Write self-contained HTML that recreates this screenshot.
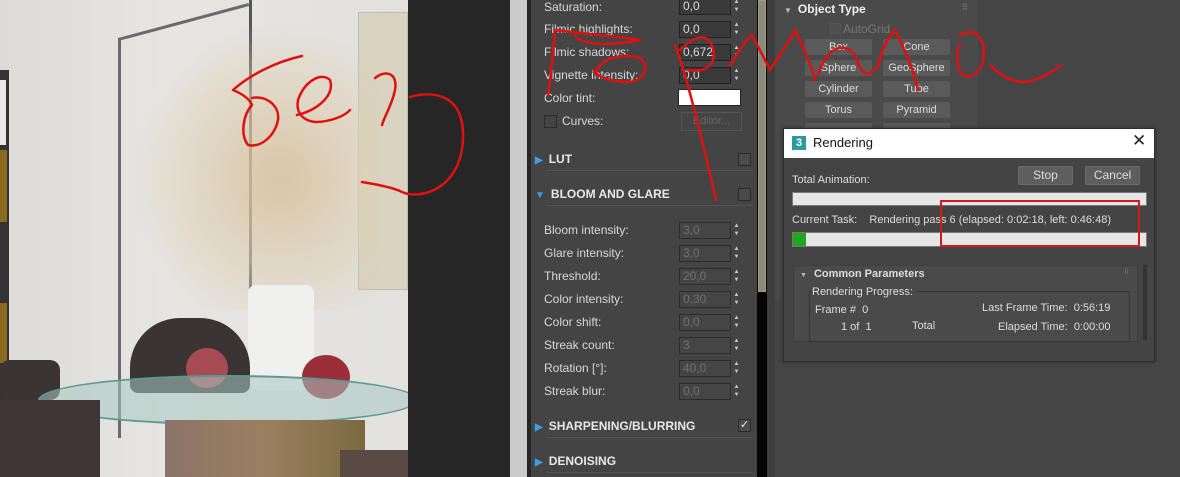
<!DOCTYPE html>
<html><head><meta charset="utf-8"><style>
*{box-sizing:border-box;margin:0;padding:0}
body{width:1180px;height:477px;overflow:hidden;background:#454545;font-family:"Liberation Sans",sans-serif;position:relative}
.a{position:absolute}
.lbl{position:absolute;left:544px;color:#d8d8d8;font-size:12px;line-height:14px}
.inp{position:absolute;left:679px;width:52px;height:17px;border:1px solid #2c2c2c;background:#454545;color:#707070;font-size:12px;padding-left:3px;line-height:15px}
.inp.on{background:#3a3a3a;color:#d8d8d8;border-color:#222}
.spin{position:absolute;left:732px;width:9px;height:17px;color:#ccc;font-size:6px;line-height:8px;text-align:center}
.sec{position:absolute;left:535px;color:#e8e8e8;font-weight:bold;font-size:12px}
.sec i{color:#3a9ee8;font-style:normal;font-size:10px;margin-right:6px}
.secline{position:absolute;left:547px;width:206px;height:1px;background:#2a2a2a;border-bottom:1px solid #555}
.cb{position:absolute;left:738px;width:13px;height:13px;border:1px solid #2a2a2a;background:#4a4a4a}
.btn{position:absolute;height:16px;width:67px;background:#5a5a5a;border-radius:2px;color:#ddd;font-size:11px;text-align:center;line-height:16px}
.dbtn{position:absolute;height:19px;background:#5e5e5e;border:1px solid #6a6a6a;color:#ddd;font-size:12px;text-align:center;line-height:17px;border-radius:2px}
</style></head><body>
<!-- photo -->
<div class="a" style="left:0;top:0;width:408px;height:477px;background:linear-gradient(90deg,#dcdbd8,#e6e5e2 40%,#e2e1de);overflow:hidden">
 <div class="a" style="left:0;top:70px;width:9px;height:407px;background:#333"></div>
 <div class="a" style="left:0;top:150px;width:7px;height:72px;background:#8a6a20"></div>
 <div class="a" style="left:0;top:303px;width:7px;height:60px;background:#8a6a20"></div>
 <div class="a" style="left:0;top:80px;width:6px;height:65px;background:#e8e8e8"></div>
 <div class="a" style="left:118px;top:38px;width:3px;height:400px;background:#6a6a6a"></div>
 <div class="a" style="left:118px;top:38px;width:135px;height:3px;background:#6a6a6a;transform:rotate(-15deg);transform-origin:0 0"></div>
 <div class="a" style="left:249px;top:0;width:3px;height:330px;background:#555"></div>
 <div class="a" style="left:358px;top:12px;width:50px;height:278px;background:#d8d4c0;border:1px solid #bbb"></div>
 <div class="a" style="left:130px;top:20px;width:250px;height:290px;background:radial-gradient(ellipse at 60% 55%,rgba(215,195,160,.9),rgba(222,208,180,.6) 40%,rgba(230,225,215,0) 70%)"></div>
 <div class="a" style="left:248px;top:285px;width:66px;height:105px;background:#f0f0ee;border-radius:8px 8px 10px 10px"></div>
 <div class="a" style="left:130px;top:318px;width:120px;height:75px;background:#3a3533;border-radius:50px 50px 8px 8px"></div>
 <div class="a" style="left:186px;top:348px;width:42px;height:40px;background:#a84a52;border-radius:50%"></div>
 <div class="a" style="left:302px;top:355px;width:48px;height:44px;background:#9a2f3a;border-radius:50%"></div>
 <div class="a" style="left:0;top:360px;width:60px;height:40px;background:#3a3533;border-radius:10px"></div>
 <div class="a" style="left:38px;top:375px;width:380px;height:50px;background:rgba(170,200,195,.55);border-radius:50%;border:2px solid #5a9a90"></div>
 <div class="a" style="left:165px;top:420px;width:200px;height:57px;background:linear-gradient(90deg,#8a7468,#9a8060,#7a6a40)"></div>
 <div class="a" style="left:0;top:400px;width:100px;height:77px;background:#3d3634"></div>
 <div class="a" style="left:340px;top:450px;width:68px;height:27px;background:#5a4a44"></div>
</div>
<div class="a" style="left:408px;top:0;width:102px;height:477px;background:#262626"></div>
<div class="a" style="left:510px;top:0;width:17px;height:477px;background:#cacaca"></div>
<div class="a" style="left:527px;top:0;width:4px;height:477px;background:#262626"></div>
<div class="a" style="left:531px;top:0;width:226px;height:477px;background:#444"></div>
<div class="a" style="left:757px;top:0;width:10px;height:477px;background:#050505"></div>
<div class="a" style="left:758px;top:0;width:8px;height:292px;background:#8a8a84;border:1px solid #a8a068"></div>
<div class="a" style="left:767px;top:0;width:8px;height:477px;background:#3e3e3e"></div>
<div class="a" style="left:775px;top:0;width:203px;height:300px;background:#4a4a4a"></div>

<!-- left panel rows -->
<div class="lbl" style="top:0">Saturation:</div><div class="inp on" style="top:-2px">0,0</div><div class="spin" style="top:-2px">▲<br>▼</div>
<div class="lbl" style="top:22px">Filmic highlights:</div><div class="inp on" style="top:21px">0,0</div><div class="spin" style="top:21px">▲<br>▼</div>
<div class="lbl" style="top:45px">Filmic shadows:</div><div class="inp on" style="top:44px">0,672</div><div class="spin" style="top:44px">▲<br>▼</div>
<div class="lbl" style="top:68px">Vignette intensity:</div><div class="inp on" style="top:67px">0,0</div><div class="spin" style="top:67px">▲<br>▼</div>
<div class="lbl" style="top:91px">Color tint:</div><div class="a" style="left:678px;top:89px;width:63px;height:17px;background:#fff;border:1px solid #222"></div>
<div class="a" style="left:544px;top:115px;width:13px;height:13px;border:1px solid #2a2a2a;background:#444"></div><div class="lbl" style="top:114px;left:562px">Curves:</div>
<div class="a" style="left:681px;top:112px;width:61px;height:19px;border:1px solid #555;color:#666;font-size:11px;text-align:center;line-height:17px">Editor...</div>
<div class="sec" style="top:152px"><i>▶</i>LUT</div><div class="cb" style="top:153px"></div><div class="secline" style="top:170px"></div>
<div class="sec" style="top:187px"><i>▼</i>BLOOM AND GLARE</div><div class="cb" style="top:188px"></div><div class="secline" style="top:205px"></div>
<div class="lbl" style="top:223px">Bloom intensity:</div><div class="inp" style="top:222px">3,0</div><div class="spin" style="top:222px">▲<br>▼</div>
<div class="lbl" style="top:246px">Glare intensity:</div><div class="inp" style="top:245px">3,0</div><div class="spin" style="top:245px">▲<br>▼</div>
<div class="lbl" style="top:269px">Threshold:</div><div class="inp" style="top:268px">20,0</div><div class="spin" style="top:268px">▲<br>▼</div>
<div class="lbl" style="top:292px">Color intensity:</div><div class="inp" style="top:291px">0,30</div><div class="spin" style="top:291px">▲<br>▼</div>
<div class="lbl" style="top:315px">Color shift:</div><div class="inp" style="top:314px">0,0</div><div class="spin" style="top:314px">▲<br>▼</div>
<div class="lbl" style="top:338px">Streak count:</div><div class="inp" style="top:337px">3</div><div class="spin" style="top:337px">▲<br>▼</div>
<div class="lbl" style="top:361px">Rotation [°]:</div><div class="inp" style="top:360px">40,0</div><div class="spin" style="top:360px">▲<br>▼</div>
<div class="lbl" style="top:384px">Streak blur:</div><div class="inp" style="top:383px">0,0</div><div class="spin" style="top:383px">▲<br>▼</div>
<div class="sec" style="top:419px"><i>▶</i>SHARPENING/BLURRING</div><div class="cb" style="top:419px;color:#eee;font-size:11px;line-height:11px;text-align:center">✓</div><div class="secline" style="top:437px"></div>
<div class="sec" style="top:454px"><i>▶</i>DENOISING</div><div class="secline" style="top:472px"></div>

<!-- object type -->
<div class="a" style="left:784px;top:2px;color:#eee;font-weight:bold;font-size:12px"><span style="font-size:8px;color:#bbb;margin-right:6px">▼</span>Object Type</div>
<div class="a" style="left:962px;top:3px;color:#888;font-size:8px">⠿</div>
<div class="a" style="left:830px;top:23px;width:11px;height:11px;background:#4f4f4f;border:1px solid #555"></div>
<div class="a" style="left:843px;top:22px;color:#777;font-size:12px">AutoGrid</div>
<div class="btn" style="left:805px;top:39px">Box</div><div class="btn" style="left:883px;top:39px">Cone</div>
<div class="btn" style="left:805px;top:60px">Sphere</div><div class="btn" style="left:883px;top:60px">GeoSphere</div>
<div class="btn" style="left:805px;top:81px">Cylinder</div><div class="btn" style="left:883px;top:81px">Tube</div>
<div class="btn" style="left:805px;top:102px">Torus</div><div class="btn" style="left:883px;top:102px">Pyramid</div>
<div class="btn" style="left:805px;top:123px"></div><div class="btn" style="left:883px;top:123px"></div>

<!-- dialog -->
<div class="a" style="left:783px;top:128px;width:372px;height:234px;background:#444;border:1px solid #2e2e2e;box-shadow:0 0 4px rgba(0,0,0,.4)"></div>
<div class="a" style="left:784px;top:129px;width:370px;height:29px;background:#fff"></div>
<div class="a" style="left:792px;top:136px;width:14px;height:14px;background:#2a9aa0;color:#fff;font-size:11px;font-weight:bold;text-align:center;line-height:14px">3</div>
<div class="a" style="left:813px;top:135px;font-size:13px;color:#111">Rendering</div>
<div class="a" style="left:1132px;top:131px;font-size:17px;color:#222">✕</div>
<div class="dbtn" style="left:1018px;top:166px;width:55px">Stop</div>
<div class="dbtn" style="left:1085px;top:166px;width:55px">Cancel</div>
<div class="a" style="left:792px;top:174px;color:#ddd;font-size:11px">Total Animation:</div>
<div class="a" style="left:792px;top:192px;width:355px;height:14px;background:#e6e6e6;border:1px solid #777"></div>
<div class="a" style="left:792px;top:214px;color:#ddd;font-size:11px;white-space:nowrap">Current Task:&nbsp;&nbsp;&nbsp;&nbsp;Rendering pass 6 (elapsed: 0:02:18, left: 0:46:48)</div>
<div class="a" style="left:792px;top:232px;width:355px;height:15px;background:#e6e6e6;border:1px solid #777"></div>
<div class="a" style="left:793px;top:233px;width:13px;height:13px;background:#1fa81f"></div>
<div class="a" style="left:793px;top:265px;width:345px;height:77px;background:#4a4a4a;border:1px solid #3e3e3e"></div>
<div class="a" style="left:1143px;top:265px;width:4px;height:75px;background:#333"></div>
<div class="a" style="left:800px;top:268px;color:#ddd;font-size:11px;font-weight:bold"><span style="font-size:7px;color:#bbb;margin-right:7px">▼</span>Common Parameters</div>
<div class="a" style="left:1124px;top:268px;color:#888;font-size:7px">⠿</div>
<div class="a" style="left:809px;top:291px;width:321px;height:51px;border:1px solid #333"></div>
<div class="a" style="left:812px;top:286px;color:#ddd;font-size:11px;background:#4a4a4a;padding-right:3px">Rendering Progress:</div>
<div class="a" style="left:815px;top:304px;color:#ddd;font-size:11px">Frame # &nbsp;0</div>
<div class="a" style="left:841px;top:321px;color:#ddd;font-size:11px">1 of &nbsp;1</div>
<div class="a" style="left:912px;top:320px;color:#ddd;font-size:11px">Total</div>
<div class="a" style="left:982px;top:302px;color:#ddd;font-size:11px">Last Frame Time:&nbsp;&nbsp;0:56:19</div>
<div class="a" style="left:998px;top:321px;color:#ddd;font-size:11px">Elapsed Time:&nbsp;&nbsp;0:00:00</div>
<div class="a" style="left:784px;top:342px;width:370px;height:19px;background:#444"></div>
<div class="a" style="left:940px;top:200px;width:200px;height:47px;border:2px solid #d51818"></div>

<!-- handwriting -->
<svg class="a" style="left:0;top:0" width="1180" height="477" fill="none" stroke="#e01010" stroke-width="2.5" stroke-linecap="round" stroke-linejoin="round">
<path d="M302 56 C275 62 250 75 233 90 C245 95 250 100 252 105 C243 115 240 135 248 145 C262 148 275 135 278 120 C280 105 265 95 252 98"/>
<path d="M297 115 C318 110 335 95 330 80 C322 72 305 80 298 100 C296 110 300 120 315 122 C330 122 345 116 350 110"/>
<path d="M375 78 C385 70 398 72 395 90 C392 105 385 115 382 125"/>
<path d="M410 97 C435 90 465 95 463 140 C460 190 420 200 402 192 C395 188 380 185 362 182"/>
<path d="M548 95 C552 70 553 50 555 30 C565 32 600 34 640 40 C620 45 580 47 575 35"/>
<path d="M596 75 C596 60 620 52 640 58 C650 66 645 80 630 82 C612 82 598 78 594 70"/>
<path d="M675 45 C685 70 700 130 716 200 M680 50 C700 30 712 35 714 55 C712 70 700 72 688 70"/>
<path d="M730 65 C740 50 745 40 752 35 C760 50 765 60 770 70 C780 55 790 40 795 30 C800 40 810 60 815 80"/>
<path d="M818 75 C828 45 845 42 855 55 C860 70 865 82 878 66 C882 50 885 42 895 30 C905 50 912 65 918 90"/>
<path d="M960 35 C968 30 982 30 984 50 C984 70 975 78 965 76 C955 70 956 55 960 45 M990 65 C1000 75 1010 82 1025 82 C1040 80 1055 70 1062 65"/>
</svg>
</body></html>
